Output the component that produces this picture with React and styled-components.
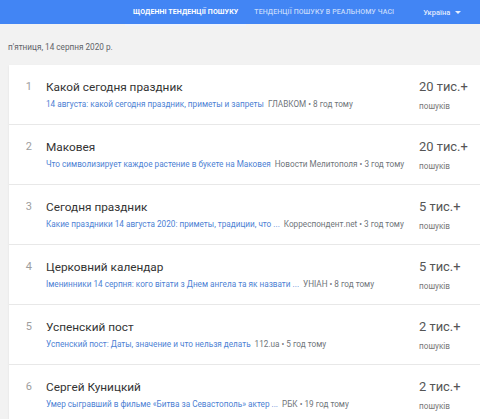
import React from "react";
import styled, { createGlobalStyle } from "styled-components";

const Global = createGlobalStyle`
  html, body { margin: 0; padding: 0; background: #f2f2f2; overflow: hidden; }
  body { font-family: Roboto, "Noto Sans", Arial, sans-serif; width: 480px; height: 419px; }
`;

const Header = styled.div`
  height: 24px;
  background: #4285f4;
  display: flex;
  align-items: stretch;
  padding-left: 125px;
  box-sizing: border-box;
`;

const Tab = styled.div`
  position: relative;
  display: flex;
  align-items: center;
  padding: 0 8px;
  font-size: 7px;
  font-weight: ${(p) => (p.$active ? 700 : 500)};
  color: ${(p) => (p.$active ? "#fff" : "rgba(255,255,255,0.7)")};
  text-transform: uppercase;
  letter-spacing: 0.1px;
  white-space: nowrap;
  ${(p) =>
    p.$active &&
    `&::after{content:"";position:absolute;left:0;right:0;bottom:-2px;height:2px;background:#eef3fd;}`}
`;

const Country = styled.div`
  display: flex;
  align-items: center;
  gap: 5px;
  font-size: 7.5px;
  font-weight: 500;
  color: rgba(255,255,255,0.85);
  margin-left: 21px;
`;

const Caret = styled.span`
  width: 0;
  height: 0;
  border-left: 3px solid transparent;
  border-right: 3px solid transparent;
  border-top: 3px solid rgba(255,255,255,0.85);
`;

const Main = styled.div`
  padding: 18px 0 0 9px;
`;

const DateLabel = styled.div`
  font-size: 8.2px;
  color: #5f6368;
  margin-left: -1px;
  height: 10px;
  line-height: 10px;
`;

const Card = styled.div`
  margin-top: 13px;
  background: #fff;
  width: 520px;
  box-shadow: 0 1px 2px rgba(0,0,0,0.08);
`;

const Row = styled.div`
  height: 60px;
  border-bottom: 1px solid #e8e8e8;
  display: grid;
  grid-template-columns: 37px 373px 1fr;
  box-sizing: border-box;
  padding-top: 14px;
`;

const Num = styled.div`
  font-size: 11px;
  color: #9e9e9e;
  text-align: right;
  padding-right: 14px;
  line-height: 16px;
`;

const Title = styled.div`
  font-size: 11.8px;
  color: #333;
  line-height: 16px;
`;

const Sub = styled.div`
  margin-top: 4px;
  font-size: 8.2px;
  line-height: 10px;
  white-space: nowrap;
`;

const Link = styled.span`
  color: #4d7fd4;
`;

const Source = styled.span`
  color: #70757a;
  margin-left: 4px;
`;

const Count = styled.div`
  font-size: 12.9px;
  color: #555;
  line-height: 16px;
`;

const Searches = styled.div`
  margin-top: 6px;
  font-size: 8.2px;
  color: #777;
  line-height: 10px;
`;

const items = [
  ["1", "Какой сегодня праздник", "14 августа: какой сегодня праздник, приметы и запреты", "ГЛАВКОМ • 8 год тому", "20 тис.+"],
  ["2", "Маковея", "Что символизирует каждое растение в букете на Маковея", "Новости Мелитополя • 3 год тому", "20 тис.+"],
  ["3", "Сегодня праздник", "Какие праздники 14 августа 2020: приметы, традиции, что ...", "Корреспондент.net • 3 год тому", "5 тис.+"],
  ["4", "Церковний календар", "Іменинники 14 серпня: кого вітати з Днем ангела та як назвати ...", "УНІАН • 8 год тому", "5 тис.+"],
  ["5", "Успенский пост", "Успенский пост: Даты, значение и что нельзя делать", "112.ua • 5 год тому", "2 тис.+"],
  ["6", "Сергей Куницкий", "Умер сыгравший в фильме «Битва за Севастополь» актер ...", "РБК • 19 год тому", "2 тис.+"],
];

export default function App() {
  return (
    <>
      <Global />
      <Header>
        <Tab $active>Щоденні тенденції пошуку</Tab>
        <Tab>Тенденції пошуку в реальному часі</Tab>
        <Country>
          Україна <Caret />
        </Country>
      </Header>
      <Main>
        <DateLabel>п'ятниця, 14 серпня 2020 р.</DateLabel>
        <Card>
          {items.map(([n, t, l, s, c]) => (
            <Row key={n}>
              <Num>{n}</Num>
              <div>
                <Title>{t}</Title>
                <Sub>
                  <Link>{l}</Link>
                  <Source>{s}</Source>
                </Sub>
              </div>
              <div>
                <Count>{c}</Count>
                <Searches>пошуків</Searches>
              </div>
            </Row>
          ))}
        </Card>
      </Main>
    </>
  );
}
